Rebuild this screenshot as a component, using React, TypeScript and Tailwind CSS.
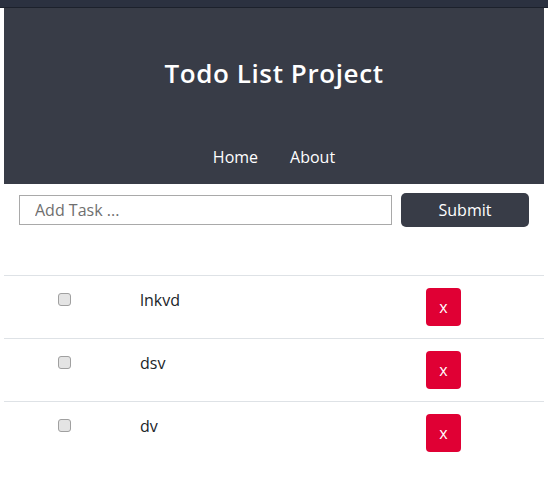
import React from "react";

const tasks = ["lnkvd", "dsv", "dv"];

export default function App() {
  return (
    <div className="min-h-[484px] bg-white" style={{ fontFamily: '"Open Sans", "Noto Sans", sans-serif' }}>
      <div className="h-[8px] bg-[#2b3140] border-b border-[#1c212c]" />
      <div className="mx-[4px]">
        <header className="h-[176px] bg-[#383c47] flex flex-col items-center text-white">
          <h1 className="mt-[47px] text-[26px] leading-[36px] font-semibold tracking-[0.6px]">Todo List Project</h1>
          <nav className="mt-[55px] flex gap-[32px] text-[16px] leading-[22px]">
            <a className="cursor-pointer">Home</a>
            <a className="cursor-pointer">About</a>
          </nav>
        </header>
        <form className="flex items-center pl-[15px] pt-[9px]" onSubmit={(e) => e.preventDefault()}>
          <input
            className="w-[373px] h-[30px] border border-[#a9a9a9] px-[15px] text-[16px] text-[#333] placeholder:text-[#6f6f6f] outline-none"
            placeholder="Add Task ..."
          />
          <button className="ml-[9px] w-[128px] h-[34px] rounded-[5px] bg-[#383c47] text-white text-[16px]">Submit</button>
        </form>
        <div className="mt-[48px]">
          {tasks.map((t) => (
            <div key={t} className="h-[63px] border-t border-[#dee2e6] flex items-start">
              <div className="w-[54px]" />
              <div className="mt-[17px] w-[13px] h-[13px] rounded-[3px] border border-[#a0a0a0] bg-[#e4e4e4]" />
              <div className="w-[69px]" />
              <div className="mt-[12px] w-[286px] text-[16px] leading-[24px] text-[#212529]">{t}</div>
              <button className="mt-[12px] w-[35px] h-[38px] rounded-[4px] bg-[#e00034] text-white text-[16px] leading-[20px]">x</button>
            </div>
          ))}
        </div>
      </div>
    </div>
  );
}
